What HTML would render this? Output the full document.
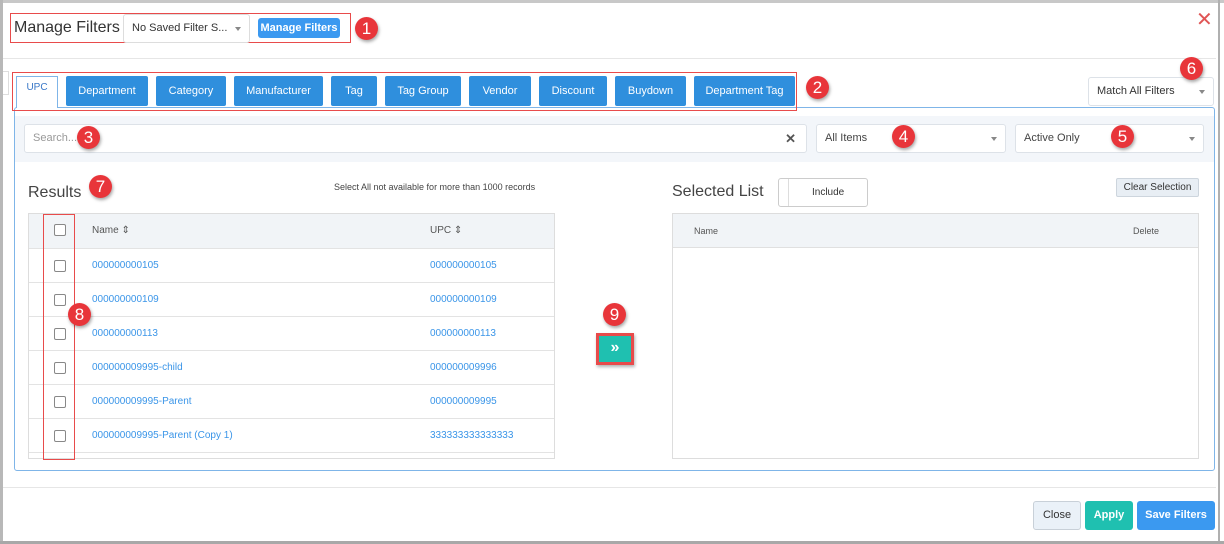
<!DOCTYPE html>
<html><head><meta charset="utf-8"><style>
*{box-sizing:border-box;margin:0;padding:0}
body{width:1224px;height:544px;background:#fff;font-family:"Liberation Sans",sans-serif;position:relative;overflow:hidden;color:#333}
.a{position:absolute}
.b{position:absolute;width:23px;height:23px;border-radius:50%;background:#e8353a;color:#fff;font-size:17px;text-align:center;line-height:23px;box-shadow:1px 2px 3px rgba(0,0,0,.35)}
.tab{position:absolute;top:76px;height:30px;background:#2f8fdd;color:#fff;font-size:11px;text-align:center;line-height:30px;border-radius:2px}
.sel{position:absolute;background:#fff;border:1px solid #dde2e8;border-radius:3px;font-size:11px;color:#444;padding-left:8px}
.caret{position:absolute;right:8px;top:50%;margin-top:-2px;border-left:3px solid transparent;border-right:3px solid transparent;border-top:4px solid #888}
.row{position:absolute;left:0;width:100%;height:34px;border-top:1px solid #e3e3e3;font-size:10px;color:#3a95e8}
.cb{position:absolute;left:25px;width:12px;height:12px;border:1px solid #888;border-radius:2px;background:#fff}
</style></head><body>
<div class="a" style="left:0;top:0;width:1224px;height:3px;background:#c8c8c8"></div>
<div class="a" style="left:0;top:0;width:3px;height:544px;background:#b8b8b8"></div>
<div class="a" style="right:4px;top:0;width:2px;height:544px;background:#b0b0b0"></div>
<div class="a" style="left:0;bottom:0;width:1224px;height:3px;background:#a8a8a8"></div>

<div class="a" style="left:10px;top:13px;width:341px;height:30px;border:1px solid #e84b4b"></div>
<div class="a" style="left:14px;top:19px;font-size:16px;color:#333">Manage Filters</div>
<div class="a" style="left:123px;top:14px;width:127px;height:29px;border:1px solid #ddd;border-radius:3px;font-size:11px;line-height:27px;padding-left:8px;color:#333">No Saved Filter S...<span class="caret" style="right:8px"></span></div>
<div class="a" style="left:258px;top:18px;width:82px;height:20px;background:#3b99f0;border-radius:3px;color:#fff;font-size:11px;font-weight:bold;text-align:center;line-height:20px">Manage Filters</div>
<div class="b" style="left:355px;top:17px">1</div>
<div class="a" style="left:1196px;top:10px;font-size:20px;color:#e05555;line-height:20px">✕</div>
<div class="a" style="left:3px;top:58px;width:1213px;height:1px;background:#e6e6e6"></div>

<div class="a" style="left:3px;top:71px;width:6px;height:24px;border:1px solid #ddd;border-left:none"></div>
<div class="a" style="left:14px;top:107px;width:1201px;height:364px;border:1px solid #7fb5e8;border-radius:3px"></div>
<div class="a" style="left:16px;top:76px;width:42px;height:32px;background:#fff;border:1px solid #7fb5e8;border-bottom:none;color:#3a78c8;font-size:10px;text-align:center;line-height:22px">UPC</div>
<div class="tab" style="left:66px;width:82px">Department</div>
<div class="tab" style="left:156px;width:70px">Category</div>
<div class="tab" style="left:234px;width:89px">Manufacturer</div>
<div class="tab" style="left:331px;width:46px">Tag</div>
<div class="tab" style="left:385px;width:76px">Tag Group</div>
<div class="tab" style="left:469px;width:62px">Vendor</div>
<div class="tab" style="left:539px;width:68px">Discount</div>
<div class="tab" style="left:615px;width:71px">Buydown</div>
<div class="tab" style="left:694px;width:101px">Department Tag</div>
<div class="a" style="left:12px;top:72px;width:785px;height:39px;border:1px solid #e84b4b"></div>
<div class="b" style="left:806px;top:76px">2</div>
<div class="sel" style="left:1088px;top:77px;width:126px;height:29px;line-height:27px;color:#333">Match All Filters<span class="caret"></span></div>
<div class="b" style="left:1180px;top:57px">6</div>

<div class="a" style="left:15px;top:116px;width:1199px;height:46px;background:#f3f6fa"></div>
<div class="sel" style="left:24px;top:124px;width:783px;height:29px;line-height:27px;color:#999">Search...<span style="position:absolute;right:10px;top:0;color:#555;font-weight:bold;font-size:13px">✕</span></div>
<div class="b" style="left:77px;top:126px">3</div>
<div class="sel" style="left:816px;top:124px;width:190px;height:29px;line-height:27px">All Items<span class="caret"></span></div>
<div class="b" style="left:892px;top:125px">4</div>
<div class="sel" style="left:1015px;top:124px;width:189px;height:29px;line-height:27px">Active Only<span class="caret"></span></div>
<div class="b" style="left:1111px;top:125px">5</div>

<div class="a" style="left:28px;top:184px;font-size:16px;color:#444">Results</div>
<div class="b" style="left:89px;top:175px">7</div>
<div class="a" style="left:334px;top:182px;font-size:9px;color:#444">Select All not available for more than 1000 records</div>

<div class="a" style="left:28px;top:213px;width:527px;height:246px;border:1px solid #ddd;overflow:hidden">
 <div class="a" style="left:0;top:0;width:100%;height:34px;background:#f1f4f7;font-size:10px;color:#555">
  <div class="cb" style="top:10px"></div>
  <div class="a" style="left:63px;top:11px">Name ⇕</div>
  <div class="a" style="left:401px;top:11px">UPC ⇕</div>
 </div>
 <div class="row" style="top:34px"><div class="cb" style="top:11px"></div><div class="a" style="left:63px;top:11px">000000000105</div><div class="a" style="left:401px;top:11px">000000000105</div></div>
 <div class="row" style="top:68px"><div class="cb" style="top:11px"></div><div class="a" style="left:63px;top:11px">000000000109</div><div class="a" style="left:401px;top:11px">000000000109</div></div>
 <div class="row" style="top:102px"><div class="cb" style="top:11px"></div><div class="a" style="left:63px;top:11px">000000000113</div><div class="a" style="left:401px;top:11px">000000000113</div></div>
 <div class="row" style="top:136px"><div class="cb" style="top:11px"></div><div class="a" style="left:63px;top:11px">000000009995-child</div><div class="a" style="left:401px;top:11px">000000009996</div></div>
 <div class="row" style="top:170px"><div class="cb" style="top:11px"></div><div class="a" style="left:63px;top:11px">000000009995-Parent</div><div class="a" style="left:401px;top:11px">000000009995</div></div>
 <div class="row" style="top:204px"><div class="cb" style="top:11px"></div><div class="a" style="left:63px;top:11px">000000009995-Parent (Copy 1)</div><div class="a" style="left:401px;top:11px">333333333333333</div></div>
 <div class="row" style="top:238px"></div>
</div>
<div class="a" style="left:43px;top:214px;width:32px;height:246px;border:1px solid #e84b4b"></div>
<div class="b" style="left:68px;top:303px">8</div>

<div class="a" style="left:596px;top:333px;width:38px;height:32px;background:#e84b4b;box-shadow:1px 2px 3px rgba(0,0,0,.3)"></div>
<div class="a" style="left:599px;top:336px;width:32px;height:26px;background:#1fc0b0;color:#fff;font-size:16px;font-weight:bold;text-align:center;line-height:24px">»</div>
<div class="b" style="left:603px;top:303px">9</div>

<div class="a" style="left:672px;top:183px;font-size:16px;color:#444">Selected List</div>
<div class="a" style="left:778px;top:178px;width:90px;height:29px;border:1px solid #ccc;border-radius:3px;font-size:10px;color:#333;line-height:27px;padding-left:33px"><span style="position:absolute;left:9px;top:0;width:1px;height:27px;background:#ddd"></span>Include</div>
<div class="a" style="left:1116px;top:178px;width:83px;height:19px;background:#e8eef4;border:1px solid #cdd5dd;border-radius:2px;font-size:10px;color:#333;text-align:center;line-height:17px">Clear Selection</div>
<div class="a" style="left:672px;top:213px;width:527px;height:246px;border:1px solid #ddd">
 <div class="a" style="left:0;top:0;width:100%;height:34px;background:#f1f4f7;border-bottom:1px solid #e0e0e0;font-size:9px;color:#555">
  <div class="a" style="left:21px;top:12px">Name</div>
  <div class="a" style="left:460px;top:12px">Delete</div>
 </div>
</div>

<div class="a" style="left:3px;top:487px;width:1213px;height:1px;background:#e6e6e6"></div>
<div class="a" style="left:1033px;top:501px;width:48px;height:29px;background:#eaf1f8;border:1px solid #c8d0d8;border-radius:3px;font-size:11px;color:#333;text-align:center;line-height:27px">Close</div>
<div class="a" style="left:1085px;top:501px;width:48px;height:29px;background:#1fc0b0;border-radius:3px;font-size:11px;font-weight:bold;color:#fff;text-align:center;line-height:29px">Apply</div>
<div class="a" style="left:1137px;top:501px;width:78px;height:29px;background:#3b99f0;border-radius:3px;font-size:11px;font-weight:bold;color:#fff;text-align:center;line-height:29px">Save Filters</div>
</body></html>
